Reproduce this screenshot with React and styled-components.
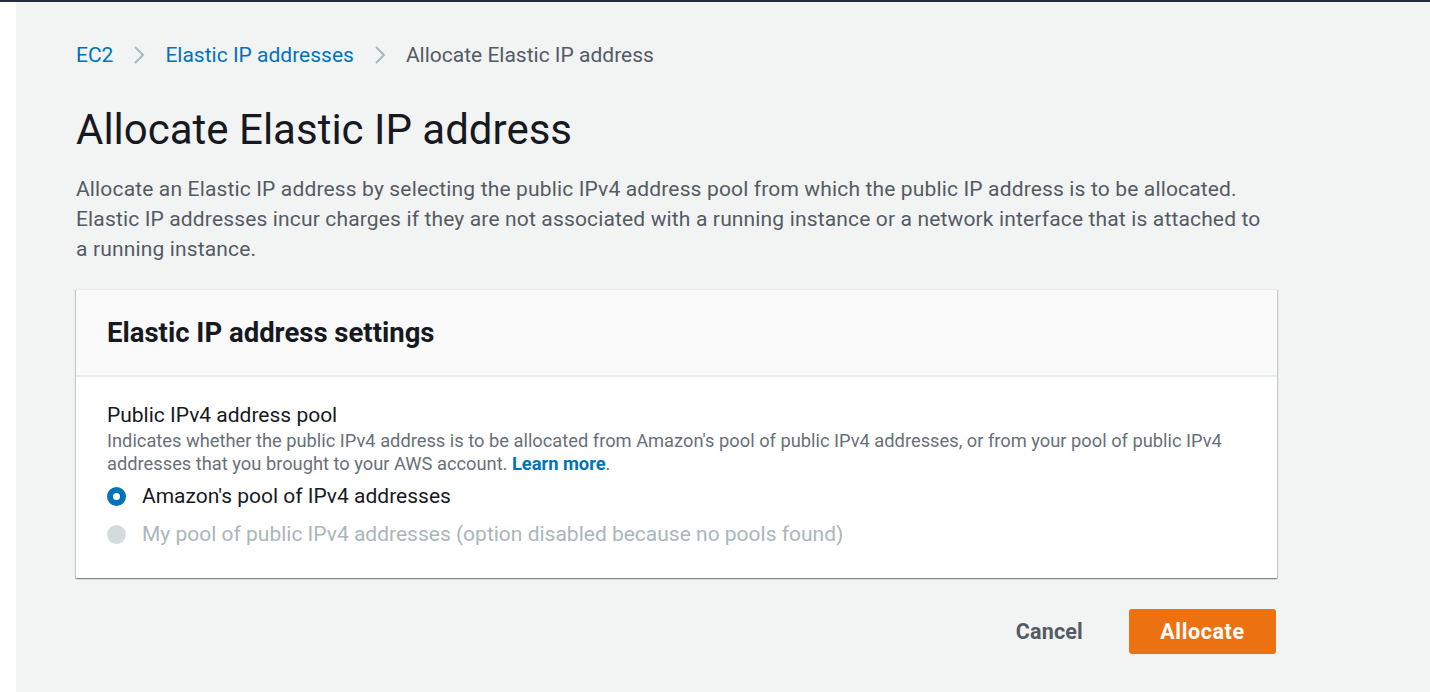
import React, { useState } from "react";
import styled, { createGlobalStyle } from "styled-components";

const GlobalStyle = createGlobalStyle`
  html, body {
    margin: 0;
    padding: 0;
    background: #ffffff;
  }
  body {
    font-family: Roboto, "Liberation Sans", Arial, sans-serif;
    color: #16191f;
  }
  * {
    box-sizing: border-box;
  }
`;

const Shell = styled.div`
  display: flex;
  min-height: 692px;
  border-top: 2px solid #232f3e;
`;

const SideStrip = styled.div`
  width: 16px;
  flex: none;
  background: #ffffff;
`;

const Main = styled.main`
  flex: 1;
  background: #f2f3f3;
  padding: 0 60px;
`;

const Content = styled.div`
  width: 1201px;
`;

const Breadcrumbs = styled.nav`
  display: flex;
  align-items: center;
  height: 103px;
  padding-top: 3px;
  font-size: 21px;
`;

const Crumbs = styled.div`
  display: flex;
  align-items: center;
  gap: 20px;
`;

const CrumbLink = styled.a`
  color: #0073bb;
  text-decoration: none;
  cursor: pointer;
`;

const CrumbCurrent = styled.span`
  color: #545b64;
`;

const Chevron = styled.svg`
  width: 12px;
  height: 22px;
  display: block;
`;

const Title = styled.h1`
  margin: 0;
  font-size: 42px;
  font-weight: 400;
  line-height: 50px;
  color: #16191f;
`;

const Intro = styled.p`
  margin: 19px 0 25px;
  font-size: 21px;
  letter-spacing: 0.15px;
  line-height: 30px;
  color: #545b64;
`;

const Card = styled.section`
  background: #ffffff;
  box-shadow: 0 1px 1px 0 rgba(0, 28, 36, 0.3),
    1px 1px 1px 0 rgba(0, 28, 36, 0.15), -1px 1px 1px 0 rgba(0, 28, 36, 0.15);
  border-top: 1px solid #eaeded;
`;

const CardHeader = styled.header`
  display: flex;
  align-items: center;
  height: 87px;
  padding: 0 31px;
  background: #fafafa;
  border-bottom: 2px solid #eaeded;
`;

const CardTitle = styled.h2`
  margin: 0;
  font-size: 27.5px;
  font-weight: 700;
  color: #16191f;
`;

const CardBody = styled.div`
  padding: 24px 31px 30px;
`;

const FieldLabel = styled.div`
  font-size: 21px;
  line-height: 28px;
  color: #16191f;
`;

const FieldHint = styled.div`
  font-size: 18.3px;
  line-height: 23px;
  color: #687078;
`;

const HintLink = styled.a`
  color: #0073bb;
  font-weight: 700;
  text-decoration: none;
  cursor: pointer;
`;

const RadioGroup = styled.div`
  display: flex;
  flex-direction: column;
  gap: 10px;
  margin-top: 7px;
`;

const RadioRow = styled.label`
  display: flex;
  align-items: center;
  gap: 16px;
  height: 28px;
  font-size: 21px;
  color: ${(p) => (p.disabled ? "#aab7b8" : "#16191f")};
  cursor: ${(p) => (p.disabled ? "default" : "pointer")};
`;

const RadioDot = styled.span`
  width: 19px;
  height: 19px;
  border-radius: 50%;
  flex: none;
  background: ${(p) => (p.disabled ? "#d5dbdb" : "#ffffff")};
  border: ${(p) =>
    p.disabled
      ? "none"
      : p.checked
      ? "6px solid #0073bb"
      : "2px solid #687078"};
`;

const Actions = styled.div`
  display: flex;
  justify-content: flex-end;
  align-items: center;
  gap: 46px;
  margin-top: 31px;
  padding-right: 1px;
`;

const TextButton = styled.button`
  border: none;
  background: none;
  padding: 0;
  font-family: inherit;
  font-size: 21.5px;
  letter-spacing: 0.2px;
  font-weight: 700;
  color: #545b64;
  cursor: pointer;
`;

const PrimaryButton = styled.button`
  width: 147px;
  height: 45px;
  border: none;
  border-radius: 3px;
  background: #ec7211;
  color: #ffffff;
  font-family: inherit;
  font-size: 21.5px;
  letter-spacing: 0.6px;
  font-weight: 700;
  cursor: pointer;
`;

const ChevronIcon = () => (
  <Chevron viewBox="0 0 12 22">
    <polyline
      points="2,3 10,11 2,19"
      fill="none"
      stroke="#aab7b8"
      strokeWidth="2"
    />
  </Chevron>
);

function App() {
  const [pool, setPool] = useState("amazon");

  return (
    <>
      <GlobalStyle />
      <Shell>
        <SideStrip />
        <Main>
          <Content>
            <Breadcrumbs>
              <Crumbs>
                <CrumbLink>EC2</CrumbLink>
                <ChevronIcon />
                <CrumbLink>Elastic IP addresses</CrumbLink>
                <ChevronIcon />
                <CrumbCurrent>Allocate Elastic IP address</CrumbCurrent>
              </Crumbs>
            </Breadcrumbs>
            <Title>Allocate Elastic IP address</Title>
            <Intro>
              Allocate an Elastic IP address by selecting the public IPv4
              address pool from which the public IP address is to be
              allocated. Elastic IP addresses incur charges if they are not
              associated with a running instance or a network interface that is
              attached to a running instance.
            </Intro>
            <Card>
              <CardHeader>
                <CardTitle>Elastic IP address settings</CardTitle>
              </CardHeader>
              <CardBody>
                <FieldLabel>Public IPv4 address pool</FieldLabel>
                <FieldHint>
                  Indicates whether the public IPv4 address is to be allocated
                  from Amazon's pool of public IPv4 addresses, or from your pool
                  of public IPv4 addresses that you brought to your AWS account.{" "}
                  <HintLink>Learn more</HintLink>.
                </FieldHint>
                <RadioGroup>
                  <RadioRow onClick={() => setPool("amazon")}>
                    <RadioDot checked={pool === "amazon"} />
                    Amazon's pool of IPv4 addresses
                  </RadioRow>
                  <RadioRow disabled>
                    <RadioDot disabled />
                    My pool of public IPv4 addresses (option disabled because no
                    pools found)
                  </RadioRow>
                </RadioGroup>
              </CardBody>
            </Card>
            <Actions>
              <TextButton>Cancel</TextButton>
              <PrimaryButton>Allocate</PrimaryButton>
            </Actions>
          </Content>
        </Main>
      </Shell>
    </>
  );
}

export default App;
